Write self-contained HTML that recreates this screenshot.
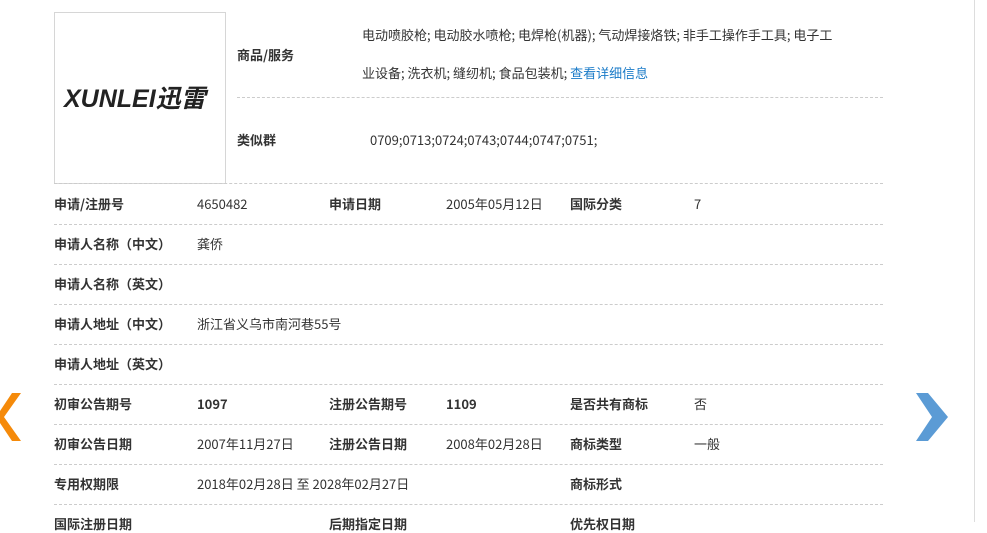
<!DOCTYPE html>
<html><head><meta charset="utf-8"><style>
html,body{margin:0;padding:0}
body{width:987px;height:522px;overflow:hidden;background:#fff;font-family:"Noto Sans CJK SC","Liberation Sans",sans-serif;font-size:13px;line-height:16px;color:#333;position:relative}
.a{position:absolute;white-space:nowrap;line-height:16px}
.b{font-weight:bold}
.d{position:absolute;border-top:1px dashed #ccc;height:0}
</style></head><body>
<div class="a" style="left:974px;top:0;width:1px;height:522px;background:#ddd"></div>
<div class="a" style="left:54px;top:12px;width:170px;height:170px;border:1px solid #d6d6d6"></div>
<div class="a" style="left:64px;top:86px;font-family:'Liberation Sans','Noto Sans CJK SC',sans-serif;font-size:25px;line-height:26px;font-weight:bold;font-style:italic;color:#222;letter-spacing:0px">XUNLEI迅雷</div>
<div class="a b" style="left:237px;top:47px">商品/服务</div>
<div class="a" style="left:362px;top:27px">电动喷胶枪; 电动胶水喷枪; 电焊枪(机器); 气动焊接烙铁; 非手工操作手工具; 电子工</div>
<div class="a" style="left:362px;top:65px">业设备; 洗衣机; 缝纫机; 食品包装机; <span style="color:#1a7bc8">查看详细信息</span></div>
<div class="d" style="left:237px;top:97px;width:646px"></div>
<div class="a b" style="left:237px;top:132px">类似群</div>
<div class="a" style="left:370px;top:132px">0709;0713;0724;0743;0744;0747;0751;</div>
<div class="d" style="left:54px;top:183px;width:829px"></div>

<div class="a b" style="left:54px;top:196px">申请/注册号</div><div class="a" style="left:197px;top:196px">4650482</div>
<div class="a b" style="left:329px;top:196px">申请日期</div><div class="a" style="left:446px;top:196px">2005年05月12日</div>
<div class="a b" style="left:570px;top:196px">国际分类</div><div class="a" style="left:694px;top:196px">7</div>
<div class="d" style="left:54px;top:224px;width:829px"></div>
<div class="a b" style="left:54px;top:236px">申请人名称（中文）</div><div class="a" style="left:197px;top:236px">龚侨</div>
<div class="d" style="left:54px;top:264px;width:829px"></div>
<div class="a b" style="left:54px;top:276px">申请人名称（英文）</div>
<div class="d" style="left:54px;top:304px;width:829px"></div>
<div class="a b" style="left:54px;top:316px">申请人地址（中文）</div><div class="a" style="left:197px;top:316px">浙江省义乌市南河巷55号</div>
<div class="d" style="left:54px;top:344px;width:829px"></div>
<div class="a b" style="left:54px;top:356px">申请人地址（英文）</div>
<div class="d" style="left:54px;top:384px;width:829px"></div>
<div class="a b" style="left:54px;top:396px">初审公告期号</div><div class="a b" style="left:197px;top:396px">1097</div>
<div class="a b" style="left:329px;top:396px">注册公告期号</div><div class="a b" style="left:446px;top:396px">1109</div>
<div class="a b" style="left:570px;top:396px">是否共有商标</div><div class="a" style="left:694px;top:396px">否</div>
<div class="d" style="left:54px;top:424px;width:829px"></div>
<div class="a b" style="left:54px;top:436px">初审公告日期</div><div class="a" style="left:197px;top:436px">2007年11月27日</div>
<div class="a b" style="left:329px;top:436px">注册公告日期</div><div class="a" style="left:446px;top:436px">2008年02月28日</div>
<div class="a b" style="left:570px;top:436px">商标类型</div><div class="a" style="left:694px;top:436px">一般</div>
<div class="d" style="left:54px;top:464px;width:829px"></div>
<div class="a b" style="left:54px;top:476px">专用权期限</div><div class="a" style="left:197px;top:476px">2018年02月28日 至 2028年02月27日</div>
<div class="a b" style="left:570px;top:476px">商标形式</div>
<div class="d" style="left:54px;top:504px;width:829px"></div>
<div class="a b" style="left:54px;top:516px">国际注册日期</div>
<div class="a b" style="left:329px;top:516px">后期指定日期</div>
<div class="a b" style="left:570px;top:516px">优先权日期</div>

<svg class="a" style="left:0;top:393px" width="22" height="48"><polygon points="21,0 4,24 21,48 12,48 0,30 0,18 12,0" fill="#f58a0a"/></svg>
<svg class="a" style="left:916px;top:393px" width="34" height="48"><polygon points="0,0 12,0 32,24 12,48 0,48 16,24" fill="#5b9bd5"/></svg>
</body></html>
